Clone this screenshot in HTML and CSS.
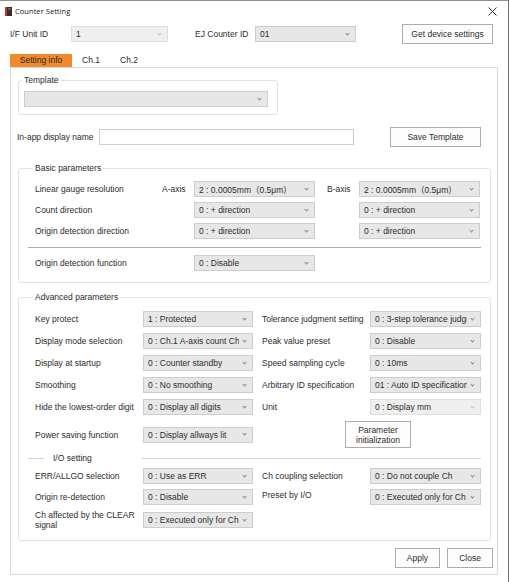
FILE: index.html
```html
<!DOCTYPE html>
<html>
<head>
<meta charset="utf-8">
<link rel="stylesheet" href="styles.css">
</head>
<body>
<div class="window">
  <div class="titlebar">
    <svg class="appicon" width="7" height="9" viewBox="0 0 7 9"><rect x="0" y="0" width="7" height="9" fill="#3b2c2c"/><rect x="0" y="0" width="2" height="9" fill="#c2362b"/><rect x="3" y="1" width="3" height="2" fill="#6b5a5a"/></svg>
    <span class="title">Counter Setting</span>
    <svg class="close" width="9" height="9" viewBox="0 0 9 9"><path d="M0.5 0.5 L8.5 8.5 M8.5 0.5 L0.5 8.5" stroke="#333" stroke-width="1" fill="none"/></svg>
  </div>

  <div class="toprow">
    <span class="lbl-unit">I/F Unit ID</span>
    <div class="combo disabled w-unit"><span class="val">1</span></div>
    <span class="lbl-ej">EJ Counter ID</span>
    <div class="combo w-ej"><span class="val">01</span></div>
    <button class="btn btn-get">Get device settings</button>
  </div>

  <div class="tabs">
    <span class="tab active">Setting info</span>
    <span class="tab">Ch.1</span>
    <span class="tab">Ch.2</span>
  </div>

  <div class="panel">
    <fieldset class="group g-template">
      <legend>Template</legend>
      <div class="combo w-template"><span class="val"></span></div>
    </fieldset>

    <div class="namerow">
      <span class="lbl-name">In-app display name</span>
      <div class="input"></div>
      <button class="btn btn-save">Save Template</button>
    </div>

    <fieldset class="group g-basic">
      <legend>Basic parameters</legend>
      <div class="basic-grid">
        <span class="c1">Linear gauge resolution</span>
        <span class="c2">A-axis</span>
        <div class="combo c3"><span class="val">2 : 0.0005mm（0.5μm）</span></div>
        <span class="c5">B-axis</span>
        <div class="combo c6"><span class="val">2 : 0.0005mm（0.5μm）</span></div>

        <span class="c1">Count direction</span>
        <div class="combo c3"><span class="val">0 : + direction</span></div>
        <div class="combo c6"><span class="val">0 : + direction</span></div>

        <span class="c1">Origin detection direction</span>
        <div class="combo c3"><span class="val">0 : + direction</span></div>
        <div class="combo c6"><span class="val">0 : + direction</span></div>
      </div>
      <div class="sep"></div>
      <div class="basic-grid basic-last">
        <span class="c1">Origin detection function</span>
        <div class="combo c3"><span class="val">0 : Disable</span></div>
      </div>
    </fieldset>

    <fieldset class="group g-adv">
      <legend>Advanced parameters</legend>
      <div class="adv-grid">
        <span class="a1">Key protect</span>
        <div class="combo a2"><span class="val">1 : Protected</span></div>
        <span class="a4">Tolerance judgment setting</span>
        <div class="combo a5"><span class="val">0 : 3-step tolerance judgment</span></div>

        <span class="a1">Display mode selection</span>
        <div class="combo a2"><span class="val">0 : Ch.1 A-axis count Ch.2 A-axis count</span></div>
        <span class="a4">Peak value preset</span>
        <div class="combo a5"><span class="val">0 : Disable</span></div>

        <span class="a1">Display at startup</span>
        <div class="combo a2"><span class="val">0 : Counter standby</span></div>
        <span class="a4">Speed sampling cycle</span>
        <div class="combo a5"><span class="val">0 : 10ms</span></div>

        <span class="a1">Smoothing</span>
        <div class="combo a2"><span class="val">0 : No smoothing</span></div>
        <span class="a4">Arbitrary ID specification</span>
        <div class="combo a5"><span class="val">01 : Auto ID specification</span></div>

        <span class="a1">Hide the lowest-order digit</span>
        <div class="combo a2"><span class="val">0 : Display all digits</span></div>
        <span class="a4">Unit</span>
        <div class="combo disabled a5"><span class="val">0 : Display mm</span></div>

        <span class="a1">Power saving function</span>
        <div class="combo a2"><span class="val">0 : Display allways lit</span></div>
        <button class="btn btn-init">Parameter<br>initialization</button>
      </div>

      <div class="io-head">
        <span class="io-line-l"></span>
        <span class="io-text">I/O setting</span>
        <span class="io-line-r"></span>
      </div>

      <div class="io-grid">
        <span class="a1">ERR/ALLGO selection</span>
        <div class="combo a2"><span class="val">0 : Use as ERR</span></div>
        <span class="a4">Ch coupling selection</span>
        <div class="combo a5"><span class="val">0 : Do not couple Ch</span></div>

        <span class="a1">Origin re-detection</span>
        <div class="combo a2"><span class="val">0 : Disable</span></div>
        <span class="a4 top">Preset by I/O</span>
        <div class="combo a5"><span class="val">0 : Executed only for Ch</span></div>

        <span class="a1 two">Ch affected by the CLEAR signal</span>
        <div class="combo a2"><span class="val">0 : Executed only for Ch</span></div>
      </div>
    </fieldset>

    <div class="footer">
      <button class="btn btn-apply">Apply</button>
      <button class="btn btn-close">Close</button>
    </div>
  </div>
</div>
</body>
</html>
```

FILE: styles.css
```css
html, body {
  margin: 0;
  padding: 0;
  background: #ffffff;
}

body {
  font-family: "Liberation Sans", Arial, "Noto Sans CJK JP", sans-serif;
  font-size: 8.5px;
  color: #2c2c2c;
}

/* buttons (base) */
.btn {
  box-sizing: border-box;
  height: 20px;
  padding: 0;
  margin: 0;
  border: 1px solid #adadad;
  background: #fdfdfd;
  font-family: inherit;
  font-size: 8.5px;
  color: #2c2c2c;
}

.window {
  width: 508px;
  height: 581px;
  border-top: 1px solid #8f8f8f;
  border-right: 1px solid #6f6f6f;
}

.titlebar {
  height: 20px;
  display: flex;
  align-items: center;
  padding-left: 5px;
}

.appicon {
  display: block;
}

.title {
  margin-left: 3px;
  font-family: "Open Sans", "Liberation Sans", sans-serif;
  font-size: 7.6px;
  color: #1a1a1a;
}

.close {
  display: block;
  margin-left: auto;
  margin-right: 11px;
}

/* top row */
.toprow {
  display: flex;
  align-items: center;
  height: 20px;
  margin-top: 3px;
  padding-left: 10px;
}

.toprow > * { flex: none; }

.lbl-unit { width: 61px; }
.w-unit { width: 97px; }
.lbl-ej { width: 60px; margin-left: 27px; white-space: nowrap; }
.w-ej { width: 101px; }
.toprow .btn-get { width: 91px; margin-left: 46px; }

/* combo */
.combo {
  box-sizing: border-box;
  height: 16px;
  border: 1px solid #cdcdcd;
  background: #e7e7e7;
  display: flex;
  align-items: center;
  padding-left: 4px;
}

.combo .val {
  flex: 1;
  min-width: 0;
  overflow: hidden;
  white-space: nowrap;
  margin-right: 4px;
}

.combo::after {
  content: "";
  flex: none;
  width: 2px;
  height: 2px;
  border-right: 1px solid #8a8a8a;
  border-bottom: 1px solid #8a8a8a;
  transform: rotate(45deg);
  margin: 0 6px 2px 0;
}

.combo.disabled {
  background: #efefef;
  border-color: #dedede;
}

.combo.disabled::after {
  border-color: #c4c4c4;
}

/* tabs */
.tabs {
  display: flex;
  height: 13px;
  margin: 10px 0 0 10px;
}

.tab {
  width: 38px;
  line-height: 13px;
  text-align: center;
}

.tab.active {
  width: 62px;
  background: #f08a2c;
}

/* panel */
.panel {
  width: 486px;
  height: 506px;
  margin-left: 10px;
  border: 1px solid #d9d9d9;
}

.group {
  box-sizing: border-box;
  margin: 0;
  min-width: 0;
  border: 1px solid #e2e2e2;
  border-radius: 3px;
}

.group legend {
  padding: 0 2px;
  margin-left: -2px;
  line-height: 10px;
}

.g-template {
  width: 260px;
  margin: 7px 0 0 7px;
  padding: 6px 0 7px 5px;
}

.w-template { width: 244px; }

.namerow {
  display: flex;
  align-items: center;
  height: 20px;
  margin: 12px 0 0 6px;
}

.namerow > * { flex: none; }

.lbl-name { width: 82px; }

.input {
  box-sizing: border-box;
  width: 255px;
  height: 16px;
  border: 1px solid #cdcdcd;
  background: #fff;
}

.namerow .btn-save {
  width: 91px;
  margin-left: 36px;
}

/* basic parameters */
.g-basic {
  width: 473px;
  margin: 16px 0 0 7px;
  padding: 8px 0 11px 16px;
}

.basic-grid {
  display: grid;
  grid-template-columns: 127px 32px 121px 12px 32px 121px;
  grid-auto-rows: 16px;
  row-gap: 5px;
  align-items: center;
}

.c1 { grid-column: 1; }
.c2 { grid-column: 2; }
.c3 { grid-column: 3; }
.c5 { grid-column: 5; }
.c6 { grid-column: 6; }

.sep {
  width: 453px;
  height: 1px;
  background: #a9a9a9;
  margin: 8px 0 0 -7px;
}

.basic-last {
  margin-top: 7px;
}

/* advanced parameters */
.g-adv {
  width: 473px;
  margin: 9px 0 0 7px;
  padding: 9px 0 10px 16px;
}

.adv-grid {
  display: grid;
  grid-template-columns: 108px 110px 9px 108px 111px;
  grid-template-rows: repeat(5, 16px) 27px;
  row-gap: 6px;
  align-items: center;
}

.a1 { grid-column: 1; }
.a2 { grid-column: 2; }
.a4 { grid-column: 4; white-space: nowrap; }
.a5 { grid-column: 5; }

.adv-grid .btn-init {
  grid-column: 4 / span 2;
  justify-self: start;
  width: 66px;
  height: 27px;
  margin-left: 83px;
  line-height: 10px;
}

.io-head {
  display: flex;
  align-items: center;
  height: 12px;
  margin: 4px 0 0 -7px;
}

.io-head > * { flex: none; }

.io-line-l {
  width: 16px;
  height: 1px;
  background: #d0d0d0;
}

.io-text {
  box-sizing: border-box;
  width: 98px;
  padding-left: 9px;
}

.io-line-r {
  width: 339px;
  height: 1px;
  background: #d0d0d0;
}

.io-grid {
  display: grid;
  grid-template-columns: 108px 110px 9px 108px 111px;
  grid-template-rows: 16px 16px 20px;
  row-gap: 5px;
  align-items: center;
  margin-top: 4px;
}

.io-grid .top {
  align-self: start;
  margin-top: 1px;
}

.io-grid .two {
  line-height: 10px;
  white-space: normal;
}

/* footer */
.footer {
  display: flex;
  justify-content: flex-end;
  gap: 7px;
  margin-top: 7px;
  padding-right: 4px;
}

.footer .btn-apply { width: 45px; }
.footer .btn-close { width: 46px; }
```
